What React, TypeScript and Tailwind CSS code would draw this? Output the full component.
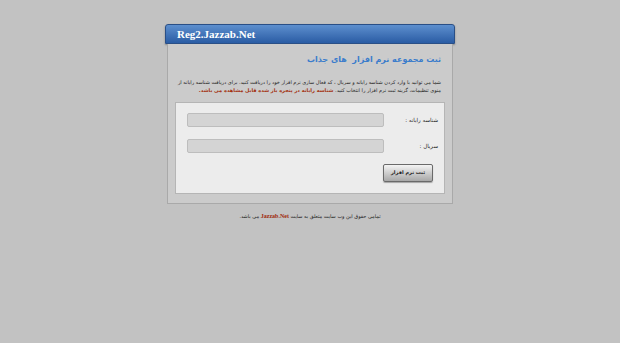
export default function App() {
  return (
    <div
      className="w-[620px] h-[343px] bg-[#c2c2c2] pt-[24px] text-[#333]"
      style={{ fontFamily: '"DejaVu Sans", "Noto Sans", sans-serif' }}
    >
      <div className="w-[290px] ml-[165px]">
        <div className="h-[20px] rounded-t-[3px] bg-gradient-to-b from-[#5d8fce] to-[#2a5ca4] border border-[#2a4f86] flex items-center pl-[11px] shadow-[0_1px_2px_rgba(0,0,0,0.3)]">
          <span
            className="text-white text-[11px] font-bold leading-none"
            style={{ fontFamily: '"Liberation Serif", serif' }}
          >
            Reg2.Jazzab.Net
          </span>
        </div>
        <div className="mx-[2px] bg-[#cbcbcb] border border-t-0 border-[#a9a9a9] px-[7px] pt-[6px] pb-[9px]">
          <div dir="rtl" className="pr-[4px] pl-[1px]">
            <h1 className="text-[#3a7ccc] text-[8px] font-bold leading-[20px] mb-[9px]">
              ثبت مجموعه نرم افزار &nbsp;های جذاب
            </h1>
            <p className="text-[5px] leading-[7.5px] text-[#222] mb-[8px]">
              شما می توانید با وارد کردن شناسه رایانه و سریال ، کد فعال سازی نرم افزار خود را دریافت کنید. برای دریافت شناسه رایانه از منوی تنظیمات، گزینه ثبت نرم افزار را انتخاب کنید.{' '}
              <span className="text-[#a3300f] font-bold">شناسه رایانه در پنجره باز شده قابل مشاهده می باشد.</span>
            </p>
          </div>
          <div dir="rtl" className="bg-[#ececec] border border-[#b5b5b5] pt-[10px] pb-[11px] pr-[6px] pl-[11px]">
            <div className="flex items-center h-[14px] mb-[12px]">
              <span className="text-[5.5px] w-[55px] text-[#222]">شناسه رایانه :</span>
              <div className="w-[201px] h-[14px] bg-[#d4d4d4] border border-[#bdbdbd] rounded-[2px]" />
            </div>
            <div className="flex items-center h-[14px] mb-[11px]">
              <span className="text-[5.5px] w-[55px] text-[#222]">سریال :</span>
              <div className="w-[201px] h-[14px] bg-[#d4d4d4] border border-[#bdbdbd] rounded-[2px]" />
            </div>
            <div className="flex pr-[5px]">
              <div className="w-[50px] h-[18px] rounded-[2px] border border-[#6a6a6a] bg-gradient-to-b from-[#f4f4f4] to-[#a8a8a8] flex items-center justify-center text-[5px] font-bold text-[#222] shadow-[0_1px_1px_rgba(0,0,0,0.3)]">
                ثبت نرم افزار
              </div>
            </div>
          </div>
        </div>
      </div>
      <div dir="rtl" className="text-center text-[5px] leading-[7px] text-[#222] mt-[9px]">
        تمامی حقوق این وب سایت متعلق به سایت{' '}
        <span className="text-[#9e2a0c] font-bold text-[6px]" style={{ fontFamily: '"Liberation Serif", serif' }}>
          Jazzab.Net
        </span>{' '}
        می باشد.
      </div>
    </div>
  );
}
